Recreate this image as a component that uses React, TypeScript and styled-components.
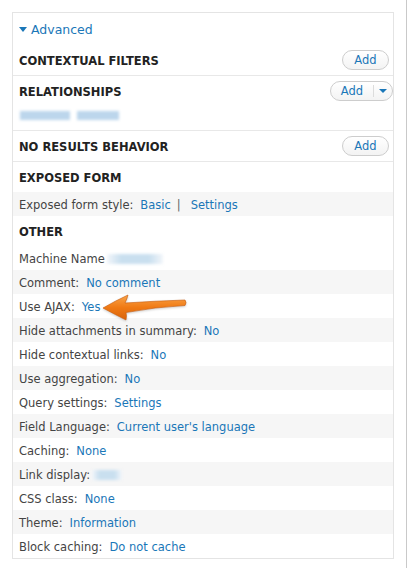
import styled, { createGlobalStyle } from "styled-components";

const GlobalStyle = createGlobalStyle`
  html, body {
    margin: 0;
    padding: 0;
    background: #fff;
  }
  body {
    font-family: "DejaVu Sans", "Liberation Sans", sans-serif;
    color: #333;
  }
`;

interface Setting {
  label: string;
  value?: string;
  blurWidth?: number;
}

const otherSettings: Setting[] = [
  { label: "Machine Name", blurWidth: 56 },
  { label: "Comment:", value: "No comment" },
  { label: "Use AJAX:", value: "Yes" },
  { label: "Hide attachments in summary:", value: "No" },
  { label: "Hide contextual links:", value: "No" },
  { label: "Use aggregation:", value: "No" },
  { label: "Query settings:", value: "Settings" },
  { label: "Field Language:", value: "Current user's language" },
  { label: "Caching:", value: "None" },
  { label: "Link display:", blurWidth: 30 },
  { label: "CSS class:", value: "None" },
  { label: "Theme:", value: "Information" },
  { label: "Block caching:", value: "Do not cache" },
];

function App(): JSX.Element {
  return (
    <Page>
      <GlobalStyle />
      <Panel>
        <Summary>
          <Caret />
          Advanced
        </Summary>

        <Section $divider>
          <Header $height={31}>
            <Title>Contextual filters</Title>
            <AddButton>Add</AddButton>
          </Header>
        </Section>

        <Section $divider>
          <Header $height={29}>
            <Title>Relationships</Title>
            <SplitButton>
              <SplitLabel>Add</SplitLabel>
              <SplitToggle>
                <Caret $small />
              </SplitToggle>
            </SplitButton>
          </Header>
          <BlurRow>
            <Smudge $width={50} />
            <Smudge $width={42} />
          </BlurRow>
        </Section>

        <Section $divider>
          <Header>
            <Title>No results behavior</Title>
            <AddButton>Add</AddButton>
          </Header>
        </Section>

        <Section>
          <Header>
            <Title>Exposed form</Title>
          </Header>
          <Row $shaded>
            Exposed form style:
            <Link>Basic</Link>
            <Pipe>|</Pipe>
            <Link $flush>Settings</Link>
          </Row>
        </Section>

        <Section>
          <Header>
            <Title>Other</Title>
          </Header>
          {otherSettings.map((s, i) => (
            <Row key={s.label} $shaded={i % 2 === 1}>
              {s.label}
              {s.value ? (
                <Link>{s.value}</Link>
              ) : (
                <Redacted $width={s.blurWidth || 40} />
              )}
            </Row>
          ))}
        </Section>
      </Panel>

      <Arrow viewBox="0 0 92 34" width="92" height="34">
        <defs>
          <linearGradient id="arrowFill" x1="0" y1="0" x2="0" y2="1">
            <stop offset="0" stopColor="#f9a54a" />
            <stop offset="0.5" stopColor="#f07a14" />
            <stop offset="1" stopColor="#d8620a" />
          </linearGradient>
        </defs>
        <path
          d="M5 18 Q17 11 30 5 Q29 9 27 13 Q57 11 87 10 Q89 12.5 87 15.5 Q57 17 28 22.5 Q29 26 28 30 Q16 24 5 18 Z"
          fill="url(#arrowFill)"
          stroke="#c85a0c"
          strokeWidth="0.6"
          strokeLinejoin="round"
        />
      </Arrow>
    </Page>
  );
}

export default App;

const Page = styled.div`
  position: relative;
  box-sizing: border-box;
  width: 407px;
  height: 568px;
  padding: 12px 0 0 12px;
  border-right: 1px solid #c9c9c9;
`;

const Panel = styled.div`
  box-sizing: border-box;
  width: 382px;
  border: 1px solid #e4e4e4;
  background: #fff;
`;

const Summary = styled.div`
  display: flex;
  align-items: center;
  gap: 4px;
  height: 31px;
  padding: 2px 0 0 6px;
  box-sizing: border-box;
  font-size: 12.5px;
  color: #1a77b8;
`;

const Caret = styled.span<{ $small?: boolean }>`
  width: 0;
  height: 0;
  border-left: ${(p) => (p.$small ? "4px" : "4.5px")} solid transparent;
  border-right: ${(p) => (p.$small ? "4px" : "4.5px")} solid transparent;
  border-top: ${(p) => (p.$small ? "4px" : "5px")} solid #1a77b8;
`;

const Section = styled.div<{ $divider?: boolean }>`
  border-bottom: ${(p) => (p.$divider ? "1px solid #e8e8e8" : "none")};
`;

const Header = styled.div<{ $height?: number }>`
  display: flex;
  align-items: center;
  justify-content: space-between;
  box-sizing: border-box;
  height: ${(p) => p.$height ?? 30}px;
  padding: 2px 4px 0 6px;
`;

const Title = styled.h2`
  margin: 0;
  font-size: 11.5px;
  font-weight: bold;
  text-transform: uppercase;
  color: #222;
`;

const AddButton = styled.button`
  box-sizing: border-box;
  width: 47px;
  height: 20px;
  margin-top: -2px;
  padding: 0;
  border: 1px solid #cdcdcd;
  border-radius: 10px;
  background: linear-gradient(#ffffff, #f3f3f3);
  font-family: inherit;
  font-size: 11.5px;
  color: #1a77b8;
`;

const SplitButton = styled.div`
  box-sizing: border-box;
  display: flex;
  align-items: center;
  width: 63px;
  height: 20px;
  margin: -2px -4px 0 0;
  border: 1px solid #cdcdcd;
  border-radius: 10px;
  background: linear-gradient(#ffffff, #f3f3f3);
`;

const SplitLabel = styled.span`
  flex: 1;
  text-align: center;
  font-size: 11.5px;
  color: #1a77b8;
  border-right: 1px solid #dcdcdc;
  line-height: 12px;
`;

const SplitToggle = styled.span`
  display: flex;
  justify-content: center;
  width: 18px;
`;

const BlurRow = styled.div`
  display: flex;
  align-items: center;
  gap: 7px;
  height: 25px;
  padding: 0 0 4px 7px;
  box-sizing: border-box;
`;

const Smudge = styled.span<{ $width: number }>`
  width: ${(p) => p.$width}px;
  height: 9px;
  background: #bcd6ec;
  filter: blur(1.5px);
`;

const Row = styled.div<{ $shaded?: boolean }>`
  display: flex;
  align-items: center;
  box-sizing: border-box;
  height: 24px;
  padding: 1px 0 0 6px;
  font-size: 11.5px;
  color: #444;
  background: ${(p) => (p.$shaded ? "#f6f6f6" : "transparent")};
  white-space: nowrap;
`;

const Link = styled.a<{ $flush?: boolean }>`
  margin-left: ${(p) => (p.$flush ? "0" : "7px")};
  color: #1a77b8;
  text-decoration: none;
`;

const Pipe = styled.span`
  margin: 0 10px 0 6px;
  color: #666;
`;

const Redacted = styled.span<{ $width: number }>`
  width: ${(p) => p.$width}px;
  height: 10px;
  margin-left: 2px;
  background: linear-gradient(90deg, #f2f6fa 0%, #c9dfef 25%, #c9dfef 75%, #f2f6fa 100%);
  filter: blur(1.5px);
`;

const Arrow = styled.svg`
  position: absolute;
  left: 98px;
  top: 290px;
  filter: drop-shadow(0 1px 1px rgba(0, 0, 0, 0.2));
`;
